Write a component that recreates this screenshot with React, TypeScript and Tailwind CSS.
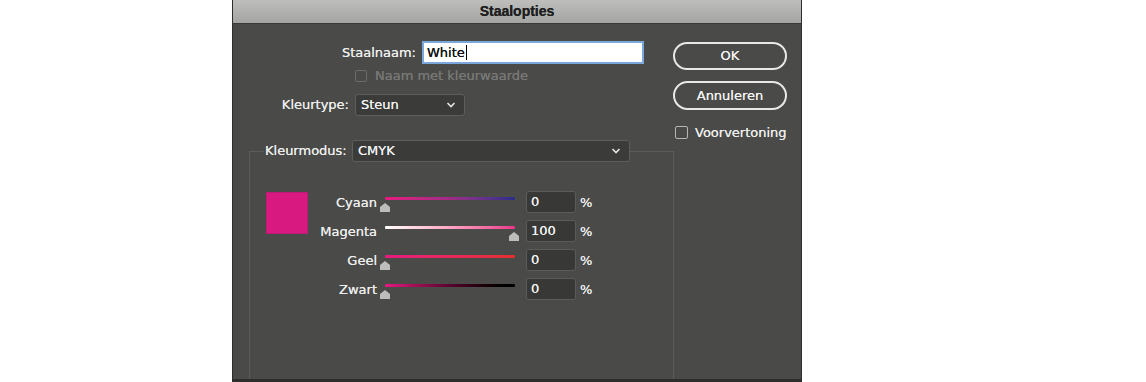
import React from 'react';

type Channel = {
  name: string;
  value: number;
  track: string;
};

const channels: Channel[] = [
  { name: 'Cyaan', value: 0, track: 'bg-gradient-to-r from-[#e8197f] via-[#a02a86] to-[#2c2a8c]' },
  { name: 'Magenta', value: 100, track: 'bg-gradient-to-r from-[#ffffff] to-[#e8338a]' },
  { name: 'Geel', value: 0, track: 'bg-gradient-to-r from-[#e8197f] to-[#e3302c]' },
  { name: 'Zwart', value: 0, track: 'bg-gradient-to-r from-[#e8197f] to-[#000000]' },
];

function Chevron() {
  return (
    <svg width="10" height="6" viewBox="0 0 10 6" className="shrink-0">
      <polyline points="1.5,1 5,4.5 8.5,1" fill="none" stroke="#e6e6e6" strokeWidth="1.6" />
    </svg>
  );
}

function Select({ value, width }: { value: string; width: string }) {
  return (
    <div
      className={`${width} h-[22px] flex items-center justify-between pl-[5px] pr-[8px] bg-[#3b3c3a] border border-[#5e5f5d] rounded-[3px] text-[#f2f2f2]`}
    >
      <span>{value}</span>
      <Chevron />
    </div>
  );
}

function Thumb() {
  return (
    <svg width="10" height="9" viewBox="0 0 10 9">
      <polygon points="5,0 10,4 10,9 0,9 0,4" fill="#bdbebc" />
    </svg>
  );
}

function SliderRow({ channel }: { channel: Channel }) {
  return (
    <div className="flex h-[29px] items-start">
      <div className="w-[68px] pt-[5px] text-right leading-[16px] text-[#ededed]">{channel.name}</div>
      <div className="relative ml-[8px] w-[130px] pt-[7px]">
        <div className={`h-[3px] w-[130px] rounded-[1px] ${channel.track}`} />
        <div className="absolute top-[13px] -ml-[5px]" style={{ left: `${(channel.value / 100) * 129}px` }}>
          <Thumb />
        </div>
      </div>
      <div className="ml-[11px] mt-[1px] flex h-[22px] w-[50px] items-center rounded-[3px] border border-[#5c5d5b] bg-[#383937] pl-[4px] text-[#f2f2f2]">
        {channel.value}
      </div>
      <div className="ml-[4px] pt-[5px] leading-[16px] text-[#ededed]">%</div>
    </div>
  );
}

export default function App() {
  return (
    <div className="h-[382px] w-[1146px] bg-white">
      <div
        className="ml-[232px] h-[382px] w-[570px] overflow-hidden border-x border-b-[3px] border-[#2e2f2d] bg-[#4a4b48] text-[13px] text-[#ededed] [text-shadow:0_0_0.3px_currentColor]"
        style={{ fontFamily: '"DejaVu Sans", sans-serif' }}
      >
        <div
          className="flex h-[24px] items-center justify-center border-b border-[#3a3b39] bg-gradient-to-b from-[#bebfbd] to-[#a4a5a3] text-[14px] font-bold text-[#1f1f1f]"
          style={{ fontFamily: '"Liberation Sans", Arial, sans-serif' }}
        >
          Staalopties
        </div>

        <div className="flex">
          <div className="w-[440px] pt-[17px]">
            <div className="flex h-[23px] items-center">
              <div className="w-[183px] text-right">Staalnaam:</div>
              <div className="ml-[6px] flex h-[23px] w-[222px] items-center border-2 border-[#7aa7dc] bg-white pl-[3px] text-[#111]">
                White
                <span className="ml-[1px] inline-block h-[15px] w-px bg-black" />
              </div>
            </div>

            <div className="mt-[4px] flex h-[16px] items-center pl-[122px] text-[#777876]">
              <div className="h-[12px] w-[12px] rounded-[2px] border border-[#6b6c6a]" />
              <span className="ml-[8px]">Naam met kleurwaarde</span>
            </div>

            <div className="mt-[10px] flex h-[22px] items-center">
              <div className="w-[116px] text-right">Kleurtype:</div>
              <div className="ml-[6px]">
                <Select value="Steun" width="w-[110px]" />
              </div>
            </div>

            <div className="ml-[16px] mt-[35px] h-[300px] w-[425px] border border-[#5c5d5b]">
              <div className="-mt-[12px] ml-[14px] flex w-fit items-center bg-[#4a4b48] pl-[1px]">
                <span className="w-[82px]">Kleurmodus:</span>
                <div className="ml-[5px]">
                  <Select value="CMYK" width="w-[278px]" />
                </div>
              </div>

              <div className="mt-[28px] flex items-start">
                <div className="ml-[16px] mt-[2px] h-[42px] w-[42px] border border-[#c0197a] bg-[#d8197f]" />
                <div className="ml-[1px]">
                  {channels.map((c) => (
                    <SliderRow key={c.name} channel={c} />
                  ))}
                </div>
              </div>
            </div>
          </div>

          <div className="w-[114px] pt-[18px]">
            <div className="flex h-[28px] items-center justify-center rounded-full border-2 border-[#e8e8e8] text-[#f2f2f2]">
              OK
            </div>
            <div className="mt-[11px] flex h-[29px] items-center justify-center rounded-full border-2 border-[#e8e8e8] text-[#f2f2f2]">
              Annuleren
            </div>
            <div className="mt-[16px] flex h-[13px] items-center pl-[2px]">
              <div className="h-[13px] w-[13px] rounded-[2px] border border-[#b5b6b4]" />
              <span className="ml-[7px]">Voorvertoning</span>
            </div>
          </div>
        </div>
      </div>
    </div>
  );
}
